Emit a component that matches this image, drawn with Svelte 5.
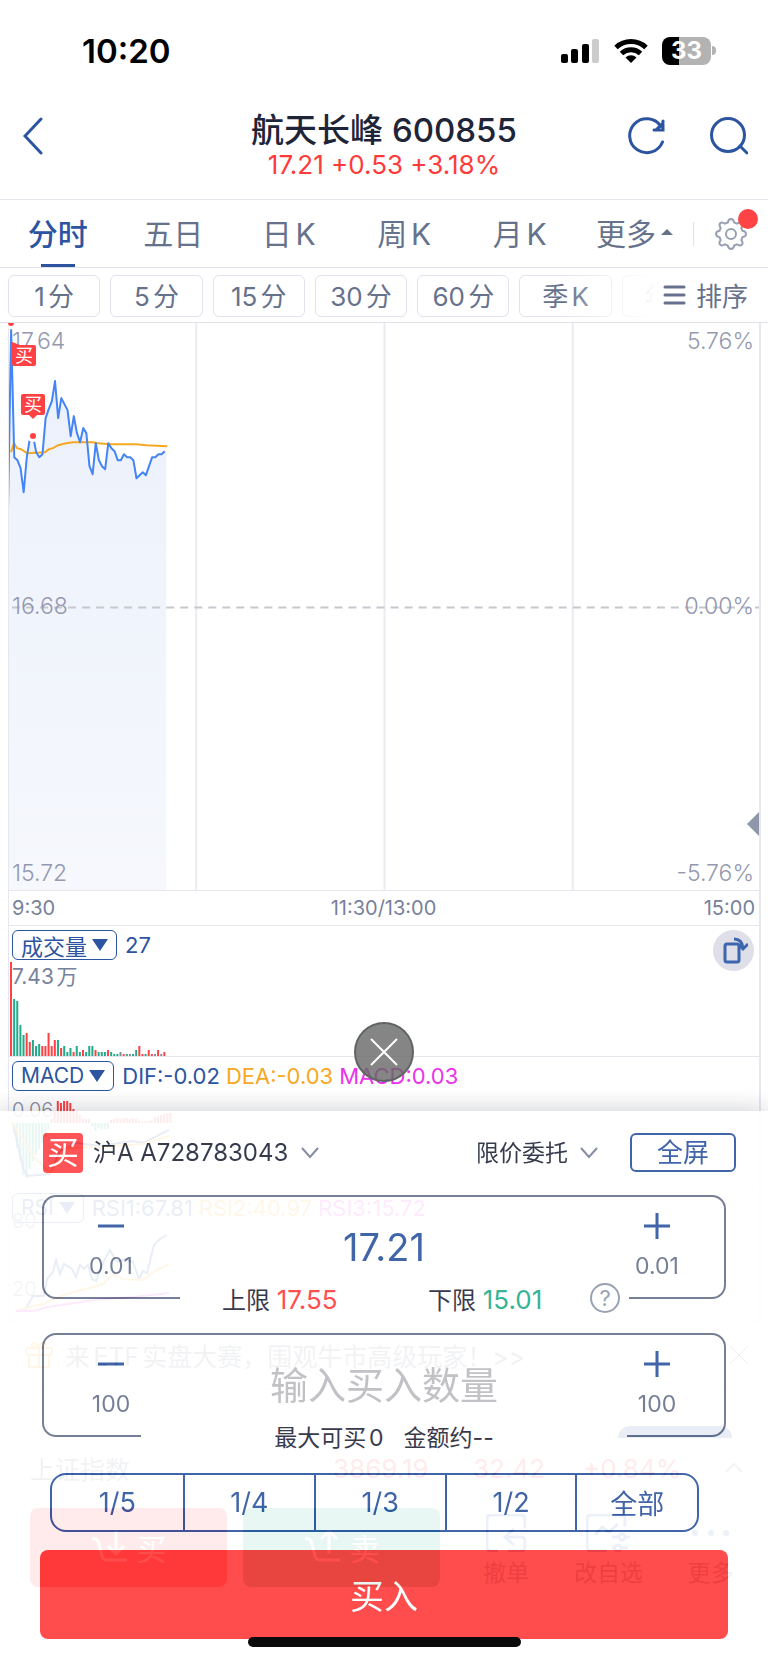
<script lang="ts">
	const tabs = ['分时', '五日', '日K', '周K', '月K'];
	const periods = ['1分', '5分', '15分', '30分', '60分', '季K', '年K'];
	const fractions = ['1/5', '1/4', '1/3', '1/2', '全部'];

	let activeTab = $state('分时');
	let price = $state('17.21');
	let amount = $state('');

	// one sample per minute
	const STEP = 3.13;
	const prices = [
		185, 7, 134, 137, 145, 169, 134, 115, 113, 129, 134, 131, 95, 86, 78, 58, 95, 75, 81, 87, 113, 93,
		110, 119, 105, 110, 143, 151, 120, 137, 143, 146, 120, 125, 128, 137, 137, 131, 134, 134, 137, 155,
		152, 149, 152, 143, 134, 134, 131, 131, 128
	];
	const pricePoints = prices.map((y, i) => `${i * STEP},${y}`).join(' ');
	const areaPoints = `0,566 ${pricePoints} 158,128 158,566`;
	const average =
		'3,129 6,120 9,125 13,126 19,130 37,129 41,126 45,125 50,122 58,120 65,119 85,119 90,120 103,121 128,121 138,122 159,123';

	const volumes =
		'r94 g57 g55 g31 g21 r23 r14 g16 g10 g12 r10 r10 r23 r10 r16 g16 r8 g10 g4 g8 r4 g10 g4 r6 g4 g10 g10 r6 g4 g4 g4 r6 g4 g2 g2 n4 r2 g2 n2 g2 g6 r10 r2 g2 r6 r2 n2 r6 n2 r4'.split(
			' '
		);
	const macd = [
		-10, -25, -38, -52, -55, -46, -38, -32, -26, -20, -14, -6, 4, 12, 22, 20, 22, 22, 20, 14, 12, 8, 4, 4,
		4, -3, -8, -5, -6, -6, -6, 3, 4, 5, 4, 5, 5, 4, 5, 4, 2, 1, 2, 2, 3, 6, 7, 8, 9, 10, 10
	];
	const colors = { r: '#ff4144', g: '#21ab8b', n: '#858c9e' };
</script>

{#snippet chevron()}
	<svg class="chevron" viewBox="0 0 18 12" width="18" height="12"><path d="M1 1l8 9 8-9" /></svg>
{/snippet}

{#snippet step(label: string, unit: string, plus: boolean)}
	<button type="button" class="step" aria-label={label}>
		<svg viewBox="0 0 26 26" width="26" height="26"><path d={plus ? 'M0 13h26M13 0v26' : 'M0 13h26'} /></svg>
		<span>{unit}</span>
	</button>
{/snippet}

<div class="screen">
	<div class="status">
		<time>10:20</time>
		<div class="indicators">
			<svg viewBox="0 0 39 24" width="39" height="24">
				<rect x="0" y="15" width="7" height="9" rx="2" />
				<rect x="10" y="10" width="7" height="14" rx="2" />
				<rect x="21" y="5" width="7" height="19" rx="2" />
				<rect x="31" y="0" width="7" height="24" rx="2" fill="#ccc" />
			</svg>
			<svg viewBox="0 0 34 24" width="34" height="24" fill="none" stroke="#000" stroke-width="5">
				<path d="M2 8.500a22 22 0 0 1 30 0" />
				<path d="M7.500 14.500a14 14 0 0 1 19 0" />
				<path d="M17 24l-5.500-5.500a8 8 0 0 1 11 0z" fill="#000" stroke="none" />
			</svg>
			<div class="battery"><span>33</span></div>
		</div>
	</div>

	<header>
		<button class="icon" aria-label="返回">
			<svg viewBox="0 0 20 38" width="20" height="38"><path d="M18 2L2 19l16 17" /></svg>
		</button>
		<div class="title">
			<h1>航天长峰 600855</h1>
			<p>17.21 +0.53 +3.18%</p>
		</div>
		<div class="tools">
			<button class="icon" aria-label="刷新">
				<svg viewBox="0 0 38 38" width="38" height="38">
					<path d="M34.500 25A17 17 0 1 1 33 9.500" />
					<path d="M35 4v9h-9M28 13l7-7" stroke-width="3" />
				</svg>
			</button>
			<button class="icon" aria-label="搜索">
				<svg viewBox="0 0 38 38" width="38" height="38">
					<circle cx="18" cy="18" r="16.500" />
					<path d="M30 29l7 7" />
				</svg>
			</button>
		</div>
	</header>

	<nav>
		<div class="tabs">
			{#each tabs as tab}
				<button class:active={activeTab === tab} onclick={() => (activeTab = tab)}>{tab}</button>
			{/each}
			<button class="more">更多<i></i></button>
		</div>
		<button class="settings" aria-label="设置">
			<svg viewBox="0 0 32 32" width="32" height="32" fill="none" stroke="#98a0b3" stroke-width="2">
				<circle cx="16" cy="16" r="5" />
				<path
					d="M12.800 4.500Q13.500 1 16 1T19.200 4.500L22 5.700Q25 3.500 26.800 5.200T26.300 10L27.500 12.800Q31 13.500 31 16T27.500 19.200L26.300 22Q28.500 25 26.800 26.800T22 26.300L19.200 27.500Q18.500 31 16 31T12.800 27.500L10 26.300Q7 28.500 5.200 26.800T5.700 22L4.500 19.200Q1 18.500 1 16T4.500 12.800L5.700 10Q3.500 7 5.200 5.200T10 5.700Z"
				/>
			</svg>
			<b></b>
		</button>
	</nav>

	<div class="periods">
		{#each periods as period}
			<button>{period}</button>
		{/each}
		<div class="sort">
			<button>
				<svg viewBox="0 0 23 20" width="23" height="20"><path d="M2 2h19M2 10h19M2 18h19" /></svg>
				<span>排序</span>
			</button>
		</div>
	</div>

	<main>
		<section class="chart">
			<svg viewBox="1 0 749 566" width="100%">
				<defs>
					<linearGradient id="area" x1="0" y1="0" x2="0" y2="1">
						<stop offset="0" stop-color="#ebf0fb" />
						<stop offset="1" stop-color="#f6f8fd" />
					</linearGradient>
				</defs>
				<polygon points={areaPoints} fill="url(#area)" />
				<path d="M188 0v566M376 0v566M564 0v566" stroke="#ebecf1" stroke-width="2" />
				<path d="M4 284h748" stroke="#c6c8ce" stroke-width="2" stroke-dasharray="8 6" />
				<polyline points={average} fill="none" stroke="#f7a823" stroke-width="2" />
				<polyline points={pricePoints} fill="none" stroke="#4384f7" stroke-width="2" stroke-linejoin="round" />
			</svg>
			<span class="label tl">17.64</span>
			<span class="label tr">5.76%</span>
			<span class="label ml">16.68</span>
			<span class="label mr">0.00%</span>
			<span class="label bl">15.72</span>
			<span class="label br">-5.76%</span>
			<svg class="marks" viewBox="0 0 60 130" width="60" height="130">
				<circle cx="3" cy="1" r="5" fill="#fff" />
				<circle cx="3" cy="0" r="3" fill="#ff4144" />
				<circle cx="25" cy="113" r="6" fill="#fff" />
				<circle cx="25" cy="113" r="3" fill="#ff4144" />
				<path d="M4 19l8 3h14a2 2 0 0 1 2 2v17a2 2 0 0 1-2 2H6a2 2 0 0 1-2-2z" fill="#ff4144" />
				<path d="M15 71h20a2 2 0 0 1 2 2v17a2 2 0 0 1-2 2h-6l-4 4-4-4h-6a2 2 0 0 1-2-2V73a2 2 0 0 1 2-2z" fill="#ff4144" />
				<text x="16" y="39">买</text>
				<text x="25" y="88">买</text>
			</svg>
			<i class="handle"></i>
		</section>

		<div class="axis"><span>9:30</span><span>11:30/13:00</span><span>15:00</span></div>

		<section class="volume">
			<div class="legend">
				<button>成交量<i></i></button>
				<span class="blue">27</span>
			</div>
			<span class="peak">7.43万</span>
			<svg class="plot" viewBox="0 0 160 94" width="160" height="94">
				{#each volumes as v, i}
					<rect x={2 + i * STEP} y={94 - +v.slice(1)} width="2" height={v.slice(1)} fill={colors[v[0]]} />
				{/each}
			</svg>
			<button class="rotate" aria-label="横屏">
				<svg viewBox="0 0 28 28" width="28" height="28" fill="none" stroke="#3d66ae" stroke-width="3">
					<rect x="5" y="8" width="14" height="18" rx="2" />
					<path d="M14 3q8 0 9 9M19 9l4 4 5-5" />
				</svg>
			</button>
		</section>

		<section class="macd">
			<div class="legend">
				<button>MACD<i></i></button>
				<span class="blue">DIF:-0.02</span>
				<span class="orange">DEA:-0.03</span>
				<span class="pink">MACD:0.03</span>
			</div>
			<span class="scale">0.06</span>
			<svg class="plot" viewBox="0 0 170 132" width="170" height="132" fill="none" stroke-width="2">
				{#each macd as m, i}
					<rect x={5 + i * STEP} y={m > 0 ? 67 - m : 67} width="2" height={Math.abs(m)} fill={m > 0 ? colors.r : colors.g} />
				{/each}
				<polyline points="5,67 15,112 19,120 42,118 52,95 69,87 92,90 125,85 135,87 161,74" stroke="#2c54a0" />
				<polyline points="5,67 25,100 42,117 60,92 92,91 135,88 161,80" stroke="#f7a823" />
			</svg>
		</section>

		<section class="rsi">
			<div class="legend">
				<button>RSI<i></i></button>
				<span class="blue">RSI1:67.81</span>
				<span class="orange">RSI2:40.97</span>
				<span class="pink">RSI3:15.72</span>
			</div>
			<span class="scale">80</span>
			<span class="scale low">20</span>
			<svg class="plot" viewBox="0 0 170 132" width="170" height="132" fill="none" stroke-width="2">
				<polyline
					points="8,122 17,121 25,107 36,107 39,90 45,83 48,71 52,85 56,75 64,80 68,88 72,76 76,80 80,76 84,90 88,92 96,72 102,61 109,73 117,70 125,73 131,90 135,82 139,84 146,56 152,50 159,46"
					stroke="#2c54a0"
				/>
				<polyline points="8,122 25,117 36,115 45,110 65,103 85,98 95,95 105,85 115,90 135,91 145,83 161,75" stroke="#f7a823" />
				<polyline points="8,122 25,122 40,118 60,115 85,111 125,108 161,104" stroke="#ea33ea" />
			</svg>
		</section>
	</main>

	<div class="banner">
		<svg viewBox="0 0 28 28" width="28" height="28" fill="none" stroke="#f7a823" stroke-width="2">
			<rect x="1" y="7" width="26" height="7" rx="2" />
			<path d="M4 14v12h20V14M14 7v19M14 7Q6 7 7 3T14 7q0-6 5-5t-5 5" />
		</svg>
		<a href="#etf">来ETF实盘大赛，围观牛市高级玩家！&gt;&gt;</a>
		<button aria-label="关闭">
			<svg viewBox="0 0 18 18" width="18" height="18" stroke="#666"><path d="M0 0l18 18M18 0L0 18" /></svg>
		</button>
	</div>
	<div class="gap"><i></i></div>
	<div class="index">
		<span>上证指数</span>
		<b>3869.19</b>
		<b>32.42</b>
		<b>+0.84%</b>
		<svg viewBox="0 0 18 10" width="18" height="10" fill="none" stroke="#888" stroke-width="2"><path d="M1 9l8-8 8 8" /></svg>
	</div>
	<footer>
		<button class="trade buy">
			<svg viewBox="0 0 38 34" width="38" height="34"><path d="M1 9q6-1 7 5l3 12q1 4 5 4h20M25 1v22M17 16l8 8 8-8" /></svg>
			买
		</button>
		<button class="trade sell">
			<svg viewBox="0 0 38 34" width="38" height="34"><path d="M1 9q6-1 7 5l3 12q1 4 5 4h20M25 24V2M17 9l8-8 8 8" /></svg>
			卖
		</button>
		<button class="action">
			<svg viewBox="0 0 40 38" width="40" height="38"><path d="M39 14V5q0-4-4-4H5Q1 1 1 5v28q0 4 4 4h7M28 15l-9 8 9 8M20 23h15q4 0 4 4v6q0 4-4 4H22" /></svg>
			撤单
		</button>
		<button class="action">
			<svg viewBox="0 0 44 38" width="44" height="38"><path d="M39 12V5q0-4-4-4H5Q1 1 1 5v28q0 4 4 4h16M9 21l7-8 7 5 9-8M26 23h7M39 23h5M26 34h3M35 34h7" /><circle cx="36" cy="23" r="3" /><circle cx="32" cy="34" r="3" /></svg>
			改自选
		</button>
		<button class="action">
			<svg viewBox="0 0 40 38" width="40" height="38"><path d="M4 19h.1M20 19h.1M35 19h.1" stroke-width="6" stroke-linecap="round" /></svg>
			更多
		</button>
	</footer>

	<form class="sheet" onsubmit={(e) => e.preventDefault()}>
		<div class="account">
			<span class="side">买</span>
			<label class="holder">
				<select aria-label="股东账号"><option>沪A A728783043</option></select>
				{@render chevron()}
			</label>
			<label class="type">
				<select aria-label="委托方式"><option>限价委托</option></select>
				{@render chevron()}
			</label>
			<button type="button" class="full">全屏</button>
		</div>

		<div class="field">
			{@render step('减价', '0.01', false)}
			<input aria-label="买入价格" bind:value={price} />
			{@render step('加价', '0.01', true)}
			<div class="note limits">
				<span>上限 <em class="up">17.55</em></span>
				<span>下限 <em class="down">15.01</em></span>
				<button type="button" class="help" aria-label="帮助">?</button>
			</div>
		</div>

		<div class="field">
			{@render step('减量', '100', false)}
			<input aria-label="买入数量" placeholder="输入买入数量" bind:value={amount} />
			{@render step('加量', '100', true)}
			<div class="note max"><span>最大可买0</span><span>金额约--</span></div>
		</div>

		<div class="fractions">
			{#each fractions as fraction}
				<button type="button">{fraction}</button>
			{/each}
		</div>

		<button class="submit">买入</button>
	</form>

	<button class="close" aria-label="关闭交易面板">
		<svg viewBox="0 0 28 28" width="28" height="28"><path d="M1 1l26 26M27 1L1 27" /></svg>
	</button>
	<div class="home"></div>
</div>

<style>
	:global(body) {
		background: #fff;
	}

	.screen {
		position: relative;
		overflow: hidden;
		font-family: Inter, 'Noto Sans CJK SC', sans-serif;
		color: #1f2538;
		text-autospace: normal;
	}

	.screen * {
		box-sizing: border-box;
	}

	button,
	input,
	select {
		font: inherit;
		color: inherit;
		background: none;
		border: none;
		padding: 0;
		margin: 0;
		text-autospace: inherit;
	}

	button {
		cursor: pointer;
	}

	svg {
		display: block;
		flex: none;
	}

	.status {
		height: 100px;
		padding: 2px 52px 0 82px;
		display: flex;
		align-items: center;
		justify-content: space-between;
	}

	time {
		color: #000;
		font-size: 33px;
		font-weight: 600;
	}

	.indicators {
		display: flex;
		align-items: center;
		gap: 14px;
	}

	.battery {
		position: relative;
		width: 49px;
		height: 28px;
		margin-right: 5px;
		border-radius: 8px;
		background: linear-gradient(90deg, #000 34%, #b3b3b3 34%);
		color: #fff;
		font-size: 24px;
		font-weight: 700;
		line-height: 28px;
		text-align: center;
	}

	.battery::after {
		content: '';
		position: absolute;
		right: -5px;
		top: 9px;
		width: 4px;
		height: 9px;
		border-radius: 0 4px 4px 0;
		background: #b3b3b3;
	}

	header {
		height: 100px;
		padding: 0 20px 0 23px;
		border-bottom: 1px solid #e6e7ec;
		display: grid;
		grid-template-columns: 119px 1fr 122px;
	}

	.icon {
		height: 72px;
		display: flex;
		align-items: center;
	}

	.icon svg {
		fill: none;
		stroke: #2c54a0;
		stroke-width: 3;
		stroke-linecap: round;
	}

	.tools {
		padding-left: 2px;
		display: flex;
		justify-content: space-between;
	}

	.title {
		text-align: center;
	}

	h1 {
		margin: 10px 0 0;
		font-size: 33px;
		line-height: 40px;
		font-weight: 500;
	}

	.title p {
		margin: 0;
		color: #ff3a3a;
		font-size: 26px;
		line-height: 30px;
	}

	nav {
		height: 68px;
		border-bottom: 1px solid #dfe1ec;
		display: flex;
		color: #66728c;
	}

	.tabs {
		flex: 1;
		display: grid;
		grid-template-columns: repeat(6, 1fr);
		font-size: 30px;
	}

	.tabs button {
		position: relative;
		padding-bottom: 4px;
	}

	.tabs .active {
		color: #2c54a0;
		font-weight: 500;
	}

	.tabs .active::after {
		content: '';
		position: absolute;
		left: calc(50% - 17px);
		bottom: 0;
		width: 34px;
		height: 3px;
		background: #2c54a0;
	}

	.tabs .more {
		display: flex;
		align-items: center;
		justify-content: flex-end;
		gap: 5px;
		padding-right: 20px;
	}

	.more i {
		border: 6px solid transparent;
		border-top: 0;
		border-bottom-color: #66728c;
	}

	.settings {
		position: relative;
		width: 75px;
		display: flex;
		align-items: center;
		justify-content: center;
	}

	.settings::before {
		content: '';
		position: absolute;
		left: 0;
		width: 1px;
		height: 24px;
		background: #dfe1ec;
	}

	.settings b {
		position: absolute;
		right: 10px;
		top: 9px;
		width: 20px;
		height: 20px;
		border-radius: 50%;
		background: #ff4346;
	}

	.periods {
		position: relative;
		height: 55px;
		padding: 7px 54px 6px 8px;
		border-bottom: 1px solid #dfe1ec;
		display: grid;
		grid-template-columns: repeat(7, 1fr);
		gap: 10px;
		color: #66728c;
		font-size: 26px;
	}

	.periods > button {
		padding-bottom: 3px;
		border: 1px solid #e2e3ed;
		border-radius: 6px;
	}

	.sort {
		position: absolute;
		inset: 0 0 0 auto;
		padding: 0 20px 0 98px;
		display: flex;
		background: linear-gradient(90deg, #fff0, #fff 90px);
	}

	.sort button {
		display: flex;
		align-items: center;
		gap: 10px;
	}

	.sort span {
		padding-bottom: 2px;
	}

	.sort svg {
		stroke: #66728c;
		stroke-width: 3;
		stroke-linecap: round;
	}

	main {
		margin: 0 7px 0 8px;
		border: solid #e6e7ef;
		border-width: 0 2px 0 1px;
	}

	section {
		position: relative;
		border-bottom: 1px solid #e6e7ec;
	}

	.label {
		position: absolute;
		color: #9499af;
		font-size: 23px;
		line-height: 26px;
		font-weight: 300;
	}

	.tl,
	.ml,
	.bl {
		left: 3px;
	}

	.tr,
	.mr,
	.br {
		right: 5px;
	}

	.tl,
	.tr {
		top: 5px;
	}

	.ml,
	.mr {
		top: calc(50% - 13px);
	}

	.bl,
	.br {
		bottom: 4px;
	}

	.marks {
		position: absolute;
		left: -1px;
		top: 0;
	}

	.marks text {
		fill: #fff;
		font-size: 18px;
		text-anchor: middle;
	}

	.handle {
		position: absolute;
		right: 0;
		bottom: 54px;
		border: 12px solid transparent;
		border-left: 0;
		border-right-color: #8f97aa;
	}

	.axis {
		height: 35px;
		padding: 0 4px 0 3px;
		border-bottom: 1px solid #e6e7ec;
		display: grid;
		grid-template-columns: 1fr auto 1fr;
		align-items: center;
		color: #78819a;
		font-size: 20px;
	}

	.axis :last-child {
		text-align: right;
	}

	.volume {
		height: 131px;
	}

	.macd {
		height: 132px;
	}

	.rsi {
		height: 133px;
	}

	.legend {
		display: flex;
		align-items: center;
		gap: 6px;
		padding: 4px 3px 0;
		height: 34px;
		font-size: 22px;
	}

	.legend button {
		height: 30px;
		margin-right: 2px;
		padding: 0 8px;
		border: 1px solid #2c54a0;
		border-radius: 6px;
		display: flex;
		align-items: center;
		gap: 5px;
		color: #2c54a0;
		font-size: 21px;
	}

	.volume .legend button {
		font-size: 22px;
	}

	.legend i {
		border: 8px solid transparent;
		border-top: 12px solid #2c54a0;
		border-bottom: 0;
	}

	.blue {
		color: #2c54a0;
	}

	.orange {
		color: #f7a823;
	}

	.pink {
		color: #ea33ea;
	}

	.peak {
		position: relative;
		display: block;
		padding-left: 3px;
		color: #78819a;
		font-size: 21px;
		line-height: 34px;
	}

	.plot {
		position: absolute;
		left: -1px;
		bottom: 0;
	}

	.scale {
		position: absolute;
		left: 3px;
		top: 41px;
		color: #858c9e;
		font-size: 20px;
		font-weight: 300;
		line-height: 24px;
	}

	.rsi .scale {
		top: 20px;
	}

	.rsi .low {
		top: 88px;
	}

	.rotate {
		position: absolute;
		right: 5px;
		top: 4px;
		width: 41px;
		height: 41px;
		border-radius: 50%;
		background: #dedfe8;
		display: grid;
		place-items: center;
	}

	.banner {
		height: 68px;
		padding: 0 20px 0 25px;
		border-bottom: 1px solid #e6e7ec;
		display: flex;
		align-items: center;
		gap: 12px;
		font-size: 25px;
	}

	.banner a {
		flex: 1;
		color: #7b8294;
		text-decoration: none;
	}

	.gap {
		height: 49px;
		padding-right: 36px;
		border-bottom: 1px solid #e6e7ec;
		display: flex;
		align-items: flex-end;
		justify-content: flex-end;
	}

	.gap i {
		width: 114px;
		height: 12px;
		border-radius: 40px 40px 0 0;
		background: #2c54a0;
	}

	.index {
		height: 60px;
		padding: 0 25px 0 30px;
		border-bottom: 1px solid #e6e7ec;
		display: grid;
		grid-template-columns: 303px 140px 110px 1fr auto;
		align-items: center;
		color: #7b8294;
		font-size: 25px;
	}

	.index b {
		color: #ff3a3a;
		font-size: 26px;
		font-weight: 400;
	}

	footer {
		height: 165px;
		padding: 9px 14px 0 30px;
		display: grid;
		grid-template-columns: 197px 204px repeat(3, 1fr);
		gap: 0 16px;
		align-items: start;
	}

	.trade {
		width: 197px;
		height: 79px;
		border-radius: 8px;
		display: flex;
		align-items: center;
		justify-content: center;
		gap: 8px;
		color: #fff;
		font-size: 30px;
	}

	.buy {
		background: #ff3a3a;
	}

	.sell {
		background: #21ab8b;
	}

	.trade svg {
		fill: none;
		stroke: #fff;
		stroke-width: 3;
	}

	.action {
		height: 79px;
		padding-top: 6px;
		display: flex;
		flex-direction: column;
		align-items: center;
		gap: 4px;
		color: #666f85;
		font-size: 23px;
		line-height: 34px;
		white-space: nowrap;
	}

	.action svg {
		fill: none;
		stroke: #4a6fb5;
		stroke-width: 3;
	}

	/* the quote page stays faintly visible behind the order form */
	.sheet {
		position: absolute;
		inset: auto 0 0;
		height: 553px;
		padding: 22px 40px 0;
		background: #fff;
		box-shadow: 0 0 24px #1f253840;
		opacity: 0.9;
		display: flex;
		flex-direction: column;
	}

	.account {
		height: 40px;
		padding: 0 0 0 3px;
		margin-right: -8px;
		display: flex;
		align-items: center;
		font-size: 23px;
	}

	.side {
		width: 40px;
		height: 40px;
		margin-right: 10px;
		border-radius: 4px;
		background: #ff4144;
		color: #fff;
		font-size: 32px;
		line-height: 40px;
		text-align: center;
	}

	label {
		display: flex;
		align-items: center;
		gap: 12px;
	}

	.holder {
		font-size: 24px;
	}

	select {
		appearance: none;
	}

	.chevron {
		fill: none;
		stroke: #78819a;
		stroke-width: 2;
	}

	.type {
		margin-left: auto;
	}

	.full {
		width: 106px;
		height: 39px;
		margin-left: 32px;
		border: 2px solid #2c54a0;
		border-radius: 6px;
		color: #2c54a0;
		font-size: 26px;
		line-height: 34px;
	}

	.field {
		position: relative;
		height: 104px;
		margin: 22px 2px 12px;
		border: 2px solid #66728c;
		border-radius: 14px;
		display: grid;
		grid-template-columns: 134px 1fr 134px;
	}

	.field + .field {
		margin: 22px 2px 0;
	}

	.step {
		padding-top: 16px;
		display: flex;
		flex-direction: column;
		align-items: center;
		gap: 12px;
		color: #66728c;
		font-size: 23px;
		line-height: 30px;
	}

	.step svg {
		fill: none;
		stroke: #2c54a0;
		stroke-width: 3;
	}

	.field input {
		min-width: 0;
		height: 100px;
		color: #2c54a0;
		font-size: 38px;
		text-align: center;
		outline: none;
	}

	.field input::placeholder {
		color: #bbbbc0;
	}

	.note {
		position: absolute;
		bottom: -18px;
		height: 34px;
		background: #fff;
		color: #1f2538;
		align-items: center;
	}

	.limits {
		left: 136px;
		right: 95px;
		padding-left: 42px;
		display: grid;
		grid-template-columns: 206px 162px auto;
		font-size: 24px;
	}

	.max {
		left: 97px;
		right: 97px;
		display: flex;
		justify-content: center;
		gap: 20px;
		font-size: 23px;
	}

	em {
		font-size: 26px;
		font-style: normal;
	}

	.up {
		color: #ff3a3a;
	}

	.down {
		color: #21ab8b;
	}

	.help {
		width: 30px;
		height: 30px;
		border: 2px solid #8f97aa;
		border-radius: 50%;
		color: #8f97aa;
		font-size: 22px;
		line-height: 26px;
	}

	.fractions {
		height: 59px;
		margin: 36px 29px 18px 10px;
		border: 2px solid #2c54a0;
		border-radius: 16px;
		display: grid;
		grid-template-columns: repeat(4, 14fr) 13fr;
		color: #2c54a0;
		font-size: 27px;
	}

	.fractions button + button {
		border-left: 2px solid #2c54a0;
	}

	.submit {
		height: 89px;
		border-radius: 8px;
		background: #ff3939;
		color: #fff;
		font-size: 34px;
	}

	.close {
		position: absolute;
		left: calc(50% - 30px);
		bottom: 582px;
		width: 60px;
		height: 60px;
		border: 2px solid #5f6467;
		border-radius: 50%;
		background: #666c;
		display: grid;
		place-items: center;
	}

	.close svg {
		stroke: #fff;
		stroke-width: 2;
	}

	.home {
		position: absolute;
		left: 50%;
		bottom: 17px;
		width: 273px;
		height: 10px;
		margin-left: -136px;
		border-radius: 5px;
		background: #0b0b0b;
	}
</style>
